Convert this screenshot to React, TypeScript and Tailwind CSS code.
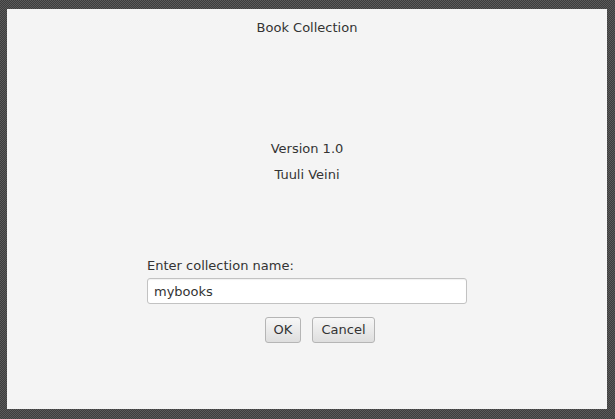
export default function App() {
  return (
    <div className="w-[615px] h-[419px] pl-[7px] pt-[9px] bg-[#4a4a4a] bg-[repeating-conic-gradient(#3d3d3d_0_25%,#5a5a5a_0_50%)] bg-[length:2px_2px] font-['DejaVu_Sans',sans-serif] text-[13px] text-[#333333]">
      <div className="w-[600px] h-[400px] bg-[#f4f4f4] flex flex-col items-center">
        <div className="mt-[10px] h-[18px] leading-[18px]">Book Collection</div>

        <div className="mt-[103px] h-[18px] leading-[18px]">Version 1.0</div>
        <div className="mt-[8px] h-[18px] leading-[18px]">Tuuli Veini</div>

        <div className="mt-[73px] w-[320px]">
          <div className="h-[18px] leading-[18px]">Enter collection name:</div>
          <input
            defaultValue="mybooks"
            className="mt-[3px] w-[320px] h-[26px] px-[6px] bg-white border border-[#c2c2c2] rounded-[3px] outline-none text-[13px] text-[#333333] shadow-[inset_0_1px_1px_rgba(0,0,0,0.06)]"
          />
        </div>

        <div className="mt-[13px] flex gap-[11px] pl-[26px]">
          <button className="w-[36px] h-[26px] rounded-[3px] border border-[#b5b5b5] bg-gradient-to-b from-[#f7f7f7] to-[#dedede] text-[#333333]">
            OK
          </button>
          <button className="w-[63px] h-[26px] rounded-[3px] border border-[#b5b5b5] bg-gradient-to-b from-[#f7f7f7] to-[#dedede] text-[#333333]">
            Cancel
          </button>
        </div>
      </div>
    </div>
  );
}
